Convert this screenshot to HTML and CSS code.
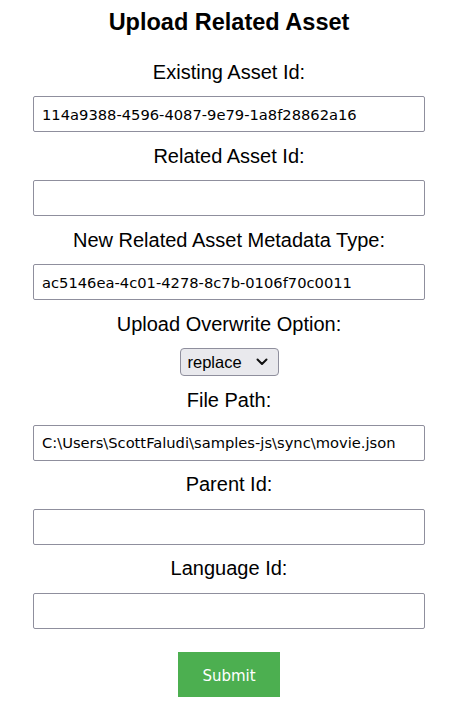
FILE: index.html
```html
<!DOCTYPE html>
<html>
<head>
<meta charset="utf-8">
<link rel="stylesheet" href="styles.css">
</head>
<body>
<main class="page">
  <h2 class="title">Upload Related Asset</h2>
  <form class="form">
    <label class="label" for="f1">Existing Asset Id:</label>
    <input class="field" id="f1" type="text" value="114a9388-4596-4087-9e79-1a8f28862a16">
    <label class="label" for="f2">Related Asset Id:</label>
    <input class="field" id="f2" type="text" value="">
    <label class="label" for="f3">New Related Asset Metadata Type:</label>
    <input class="field" id="f3" type="text" value="ac5146ea-4c01-4278-8c7b-0106f70c0011">
    <label class="label" for="f4">Upload Overwrite Option:</label>
    <div class="select">
      <span class="select-text">replace</span>
      <svg class="chev" width="12" height="8" viewBox="0 0 12 8"><path d="M1.5 1.5 L6 6 L10.5 1.5" fill="none" stroke="#111" stroke-width="2" stroke-linecap="round" stroke-linejoin="round"/></svg>
    </div>
    <label class="label" for="f5">File Path:</label>
    <input class="field" id="f5" type="text" value="C:\Users\ScottFaludi\samples-js\sync\movie.json">
    <label class="label" for="f6">Parent Id:</label>
    <input class="field" id="f6" type="text" value="">
    <label class="label" for="f7">Language Id:</label>
    <input class="field" id="f7" type="text" value="">
    <button class="submit" type="button">Submit</button>
  </form>
</main>
</body>
</html>
```
FILE: styles.css
```css
html, body {
  margin: 0;
  padding: 0;
  background: #fff;
}
body {
  font-family: "Liberation Sans", Arial, sans-serif;
  color: #000;
}
.page {
  display: flex;
  flex-direction: column;
  align-items: center;
  padding-top: 8px;
  padding-left: 4px;
}
.title {
  margin: 0;
  font-size: 23.5px;
  line-height: 28px;
  font-weight: bold;
}
.form {
  display: flex;
  flex-direction: column;
  align-items: center;
  margin-top: 24.5px;
}
.label {
  display: block;
  font-size: 20px;
  line-height: 23px;
  margin: 0 0 12.5px;
}
.field {
  box-sizing: border-box;
  width: 392px;
  height: 36px;
  margin: 0 0 12.5px;
  padding: 0 8px;
  border: 1px solid #8f8f9d;
  border-radius: 2px;
  font-family: "DejaVu Sans", Verdana, sans-serif;
  font-size: 14.7px;
  color: #000;
  background: #fff;
  outline: none;
}
.select {
  box-sizing: border-box;
  width: 99px;
  height: 28px;
  margin: 0 0 13px;
  padding: 0 10px 0 7px;
  display: flex;
  align-items: center;
  justify-content: space-between;
  background: #e9e9ed;
  border: 1px solid #8f8f9d;
  border-radius: 4px;
  font-size: 16.5px;
}
.chev {
  display: block;
}
.submit {
  margin-top: 10.5px;
  width: 102px;
  height: 45px;
  border: none;
  background: #4caf50;
  color: #fff;
  font-family: "DejaVu Sans", Verdana, sans-serif;
  font-size: 15px;
  padding: 3px 0 0;
}
```
